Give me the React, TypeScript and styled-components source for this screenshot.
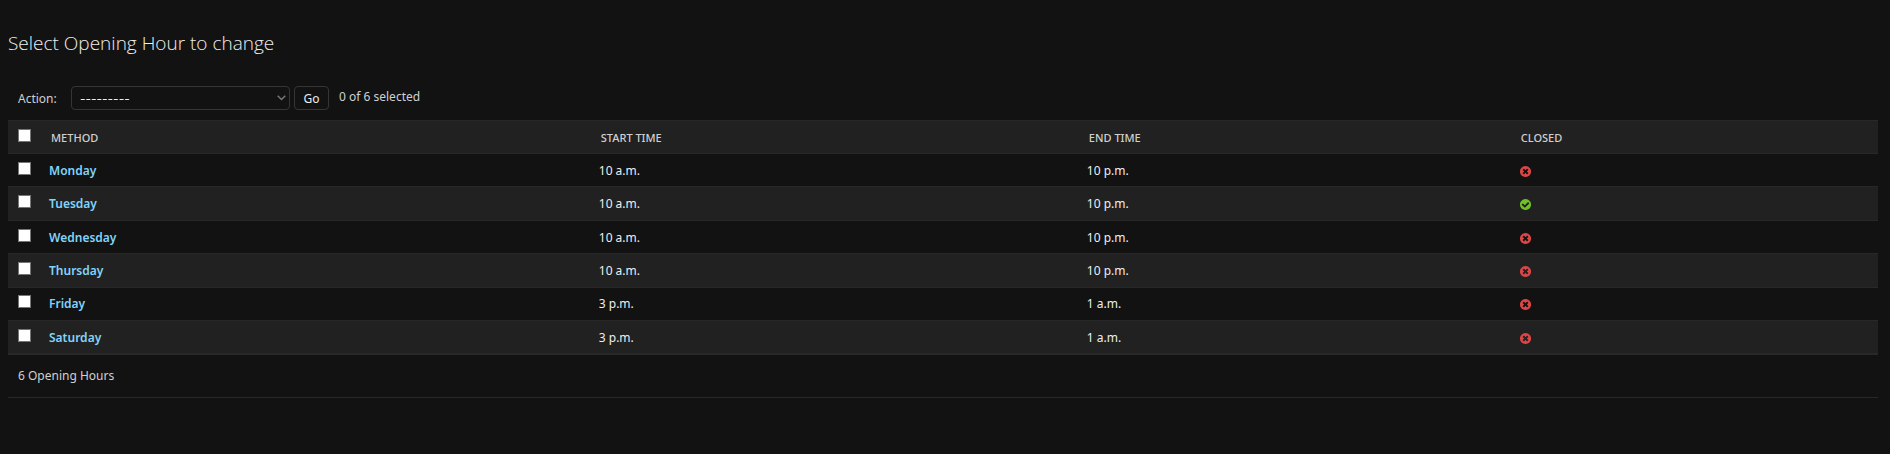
import React, { useState } from "react";
import styled, { createGlobalStyle } from "styled-components";

const GlobalStyle = createGlobalStyle`
  *, *::before, *::after { box-sizing: border-box; }
  body {
    margin: 0;
    background: #121212;
    color: #eeeeee;
    font: 12px/17px "Segoe UI", "Noto Sans", "Open Sans", sans-serif;
  }
`;

const Page = styled.main`
  padding: 31px 12px 0 8px;
`;

const Title = styled.h1`
  margin: 0 0 29px;
  font-family: "Segoe UI", "Open Sans", "Noto Sans", sans-serif;
  font-size: 19px;
  line-height: 24px;
  font-weight: 300;
`;

const Actions = styled.form`
  display: flex;
  align-items: center;
  height: 28px;
  margin-bottom: 8px;
  padding-left: 10px;
  color: #d0d0d0;
`;

const ActionLabel = styled.label`
  display: flex;
  align-items: center;
`;

const LabelText = styled.span`
  width: 53px;
`;

const SelectWrap = styled.span`
  display: grid;
  align-items: center;
  margin-right: 4px;
  > * { grid-area: 1 / 1; }
  > svg { justify-self: end; margin-right: 4px; pointer-events: none; }
`;

const Select = styled.select`
  appearance: none;
  width: 219px;
  height: 24px;
  padding: 0 20px 0 8px;
  border: 1px solid #353535;
  border-radius: 4px;
  background: #121212;
  color: #eeeeee;
  font: 12px/17px "Segoe UI", Inter, sans-serif;
`;

const GoButton = styled.button`
  width: 35px;
  height: 24px;
  padding: 0;
  border: 1px solid #353535;
  border-radius: 4px;
  background: #121212;
  color: #eeeeee;
  font: inherit;
`;

const Counter = styled.span`
  margin-left: 10px;
  padding-bottom: 4px;
`;

const Table = styled.table`
  width: 100%;
  height: 235px;
  table-layout: fixed;
  border-collapse: collapse;
  border-bottom: 2px solid #282828;
`;

const Col = styled.col<{ $width: string }>`
  width: ${(p) => p.$width};
`;

const Row = styled.tr<{ $shaded?: boolean }>`
  height: 33px;
  background: ${(p) => (p.$shaded ? "#212121" : "#121212")};
  border-top: 1px solid #282828;
`;

const HeadCell = styled.th`
  padding: 0 10px;
  color: #d0d0d0;
  font-size: 11px;
  font-weight: 500;
  text-align: left;
  text-transform: uppercase;
`;

const Cell = styled.td`
  padding: 0 8px;
  vertical-align: middle;
  svg { display: block; margin-top: 2px; }
`;

const CheckCell = styled.td`
  padding: 0 10px 4px;
  vertical-align: middle;
`;

const Checkbox = styled.input`
  appearance: none;
  display: block;
  width: 13px;
  height: 13px;
  margin: 0;
  border: 1px solid #767676;
  background: #ffffff;
  &:checked { background: #81d4fa; }
`;

const DayLink = styled.a`
  color: #81d4fa;
  font-weight: 600;
  text-decoration: none;
`;

const Paginator = styled.p`
  margin: 0;
  padding: 12px 10px 13px;
  border-bottom: 1px solid #282828;
  color: #d0d0d0;
`;

const StatusIcon = ({ on }: { on: boolean }) => (
  <svg width="13" height="13" viewBox="0 0 1792 1792" role="img" aria-label={on ? "True" : "False"}>
    {on ? (
      <path
        fill="#70bf2b"
        d="M1412 734q0-28-18-46l-91-90q-19-19-45-19t-45 19l-408 407-226-226q-19-19-45-19t-45 19l-91 90q-18 18-18 46 0 27 18 45l362 362q19 19 45 19 27 0 46-19l543-543q18-18 18-45zm252 162q0 209-103 385.500t-279.500 279.500-385.500 103-385.500-103-279.500-279.500-103-385.500 103-385.500 279.500-279.500 385.500-103 385.500 103 279.500 279.500 103 385.500z"
      />
    ) : (
      <path
        fill="#dd4646"
        d="M1277 1122q0-26-19-45l-181-181 181-181q19-19 19-45 0-27-19-46l-90-90q-19-19-46-19-26 0-45 19l-181 181-181-181q-19-19-45-19-27 0-46 19l-90 90q-19 19-19 46 0 26 19 45l181 181-181 181q-19 19-19 45 0 27 19 46l90 90q19 19 46 19 26 0 45-19l181-181 181 181q19 19 45 19 27 0 46-19l90-90q19-19 19-46zm387-226q0 209-103 385.500t-279.500 279.500-385.500 103-385.500-103-279.500-279.500-103-385.500 103-385.500 279.500-279.500 385.500-103 385.500 103 279.500 279.500 103 385.500z"
      />
    )}
  </svg>
);

const hours = [
  { day: "Monday", start: "10 a.m.", end: "10 p.m.", closed: false },
  { day: "Tuesday", start: "10 a.m.", end: "10 p.m.", closed: true },
  { day: "Wednesday", start: "10 a.m.", end: "10 p.m.", closed: false },
  { day: "Thursday", start: "10 a.m.", end: "10 p.m.", closed: false },
  { day: "Friday", start: "3 p.m.", end: "1 a.m.", closed: false },
  { day: "Saturday", start: "3 p.m.", end: "1 a.m.", closed: false },
];

export default function App() {
  const [selected, setSelected] = useState<string[]>([]);
  const toggle = (day: string) =>
    setSelected((s) => (s.includes(day) ? s.filter((d) => d !== day) : [...s, day]));
  const all = selected.length === hours.length;

  return (
    <>
      <GlobalStyle />
      <Page>
        <Title>Select Opening Hour to change</Title>
        <Actions onSubmit={(e) => e.preventDefault()}>
          <ActionLabel>
            <LabelText>Action:</LabelText>
            <SelectWrap>
              <Select name="action">
                <option value="">---------</option>
              </Select>
              <svg width="9" height="6" viewBox="0 0 9 6" fill="none" stroke="#767676" strokeWidth="1.5">
                <path d="M0.700 0.700L4.500 4.500L8.300 0.700" />
              </svg>
            </SelectWrap>
          </ActionLabel>
          <GoButton type="submit">Go</GoButton>
          <Counter>{selected.length} of {hours.length} selected</Counter>
        </Actions>
        <Table>
          <colgroup>
            <Col $width="33px" />
            <Col $width="29.4%" />
            <Col $width="26.1%" />
            <Col $width="23.1%" />
            <Col $width="auto" />
          </colgroup>
          <thead>
            <Row $shaded>
              <CheckCell>
                <Checkbox
                  type="checkbox"
                  aria-label="Select all"
                  checked={all}
                  onChange={() => setSelected(all ? [] : hours.map((h) => h.day))}
                />
              </CheckCell>
              <HeadCell scope="col">Method</HeadCell>
              <HeadCell scope="col">Start time</HeadCell>
              <HeadCell scope="col">End time</HeadCell>
              <HeadCell scope="col">Closed</HeadCell>
            </Row>
          </thead>
          <tbody>
            {hours.map((h, i) => (
              <Row key={h.day} $shaded={i % 2 === 1}>
                <CheckCell>
                  <Checkbox
                    type="checkbox"
                    aria-label={`Select ${h.day}`}
                    checked={selected.includes(h.day)}
                    onChange={() => toggle(h.day)}
                  />
                </CheckCell>
                <Cell><DayLink href="#">{h.day}</DayLink></Cell>
                <Cell>{h.start}</Cell>
                <Cell>{h.end}</Cell>
                <Cell><StatusIcon on={h.closed} /></Cell>
              </Row>
            ))}
          </tbody>
        </Table>
        <Paginator>{hours.length} Opening Hours</Paginator>
      </Page>
    </>
  );
}
